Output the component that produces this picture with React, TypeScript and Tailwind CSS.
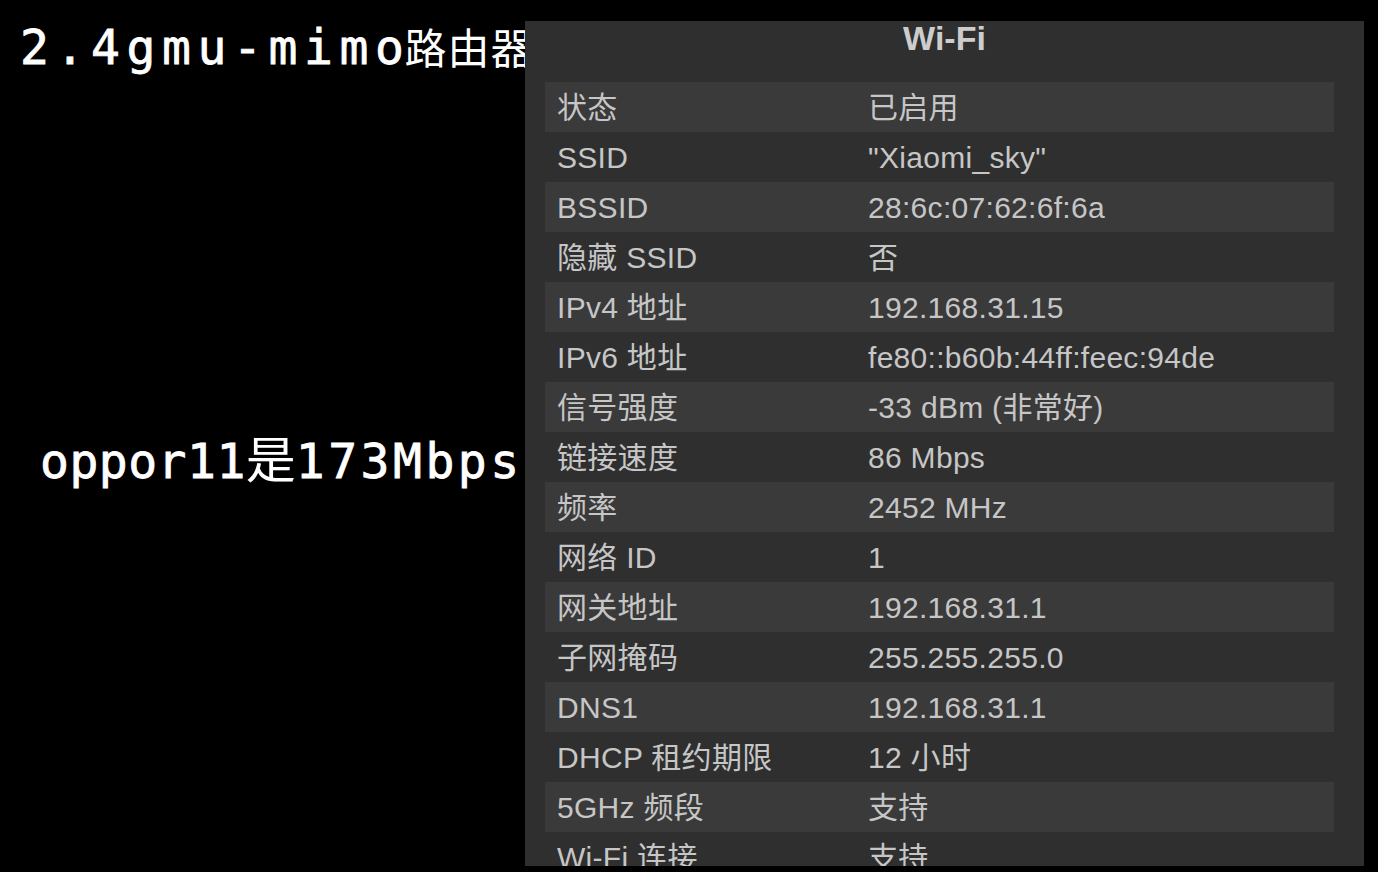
import React from "react";

const rows: [string, string][] = [
  ["状态", "已启用"],
  ["SSID", "\"Xiaomi_sky\""],
  ["BSSID", "28:6c:07:62:6f:6a"],
  ["隐藏 SSID", "否"],
  ["IPv4 地址", "192.168.31.15"],
  ["IPv6 地址", "fe80::b60b:44ff:feec:94de"],
  ["信号强度", "-33 dBm (非常好)"],
  ["链接速度", "86 Mbps"],
  ["频率", "2452 MHz"],
  ["网络 ID", "1"],
  ["网关地址", "192.168.31.1"],
  ["子网掩码", "255.255.255.0"],
  ["DNS1", "192.168.31.1"],
  ["DHCP 租约期限", "12 小时"],
  ["5GHz 频段", "支持"],
  ["Wi-Fi 连接", "支持"],
];

const mono = { fontFamily: '"DejaVu Sans Mono", "Noto Sans CJK SC", monospace' };
const cjk = { fontFamily: '"Noto Sans CJK SC", sans-serif' };

export default function App() {
  return (
    <div className="w-[1378px] h-[872px] bg-black flex overflow-hidden">
      <div className="w-[525px] shrink-0 flex flex-col text-white">
        <div className="pl-[20px] pt-[19px] h-[60px] flex items-baseline whitespace-nowrap" style={mono}>
          <span className="text-[48px] leading-[54px] tracking-[6.6px] font-medium [-webkit-text-stroke:0.8px_white]">
            2.4gmu-mimo
          </span>
          <span className="text-[42px] leading-[54px] tracking-[1px] -ml-[6px]" style={cjk}>
            路由器
          </span>
        </div>
        <div className="mt-[368px] pl-[40px] flex items-baseline whitespace-nowrap" style={mono}>
          <span className="text-[48px] leading-[56px] tracking-[0.5px] [-webkit-text-stroke:0.8px_white]">
            oppor11
          </span>
          <span className="text-[50px] leading-[56px]" style={cjk}>
            是
          </span>
          <span className="text-[48px] leading-[56px] tracking-[3.5px] [-webkit-text-stroke:0.8px_white]">
            173Mbps
          </span>
        </div>
      </div>
      <div
        className="relative z-10 w-[839px] shrink-0 mt-[21px] h-[845px] bg-[#2f2f2f] overflow-hidden flex flex-col text-[#c6c6c6]"
        style={{ fontFamily: '"Liberation Sans", "Noto Sans CJK SC", sans-serif' }}
      >
        <div className="h-[61px] shrink-0 flex justify-center">
          <span className="text-[34px] leading-[36px] -mt-[1px] font-bold text-[#cdcdcd]">Wi-Fi</span>
        </div>
        <div className="pl-[20px] pr-[30px] flex flex-col">
          {rows.map(([k, v], i) => (
            <div
              key={i}
              className={`h-[50px] shrink-0 flex items-center text-[30px] tracking-[0.3px] ${
                i % 2 === 0 ? "bg-[#3a3a3a]" : ""
              }`}
            >
              <div className="w-[323px] shrink-0 pl-[12px] whitespace-nowrap">{k}</div>
              <div className="whitespace-nowrap">{v}</div>
            </div>
          ))}
        </div>
      </div>
    </div>
  );
}
